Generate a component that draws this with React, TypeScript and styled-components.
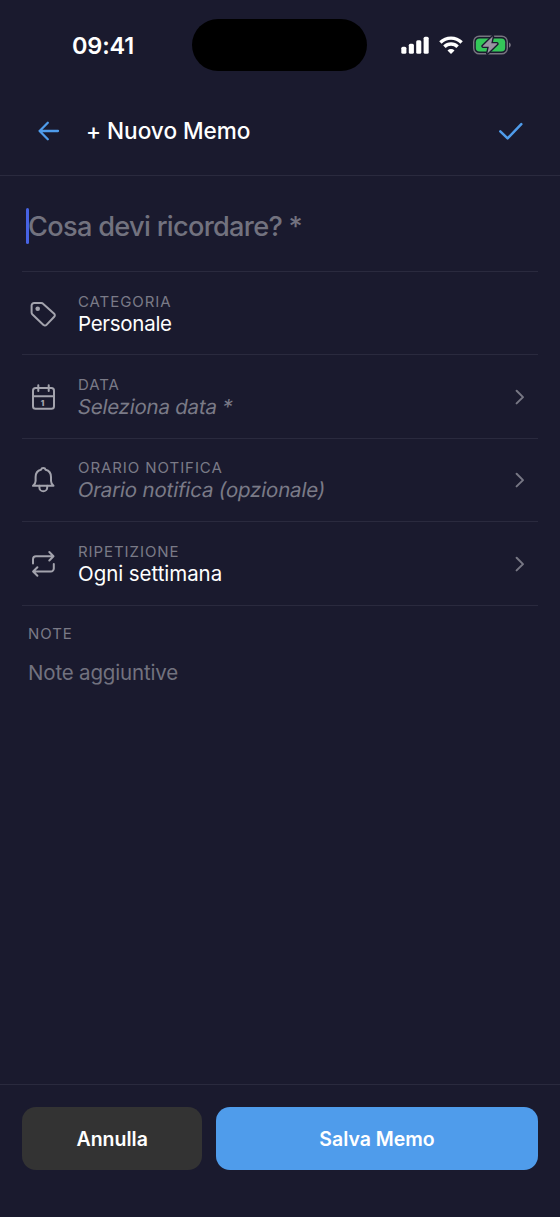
import React from "react";
import styled, { createGlobalStyle } from "styled-components";

const GlobalStyle = createGlobalStyle`
  *, *::before, *::after { box-sizing: border-box; }
  body {
    margin: 0;
    background: #1a1a2e;
    font-family: Inter, "Liberation Sans", sans-serif;
    color: #ffffff;
  }
  svg { display: block; flex: none; }
`;

const line = "#2a2a3e";

const Screen = styled.div`
  display: flex;
  flex-direction: column;
  width: 560px;
  height: 1217px;
  background: #1a1a2e;
  overflow: hidden;
`;

const StatusBar = styled.div`
  display: grid;
  grid-template-columns: 192.4px 175px 1fr;
  align-items: center;
  height: 90px;
  flex: none;
`;

const Time = styled.span`
  padding-left: 72px;
  padding-top: 1px;
  font-size: 23.5px;
  font-weight: 600;
  line-height: 28px;
  letter-spacing: -0.2px;
`;

const Island = styled.div`
  height: 51.5px;
  border-radius: 26px;
  background: #000000;
`;

const StatusIcons = styled.div`
  display: flex;
  align-items: center;
  gap: 10px;
  padding-left: 34px;
`;

const Header = styled.header`
  display: flex;
  align-items: center;
  height: 86px;
  padding: 0 36px 3px;
  border-bottom: 1px solid ${line};
  flex: none;
`;

const IconButton = styled.button`
  display: flex;
  padding: 0;
  border: 0;
  background: none;
  color: #4f9ceb;
`;

const HeaderTitle = styled.h1`
  flex: 1;
  margin: 0 0 0 24px;
  font-size: 22.6px;
  font-weight: 500;
  line-height: 28px;
  letter-spacing: -0.03px;
`;

const Form = styled.main`
  flex: 1;
  padding: 0 22px;
`;

const TitleField = styled.div`
  display: flex;
  align-items: center;
  height: 96px;
  padding: 5px 0 0 4px;
  border-bottom: 1px solid ${line};
`;

const Caret = styled.span`
  width: 3px;
  height: 36px;
  border-radius: 1.5px;
  background: #4763e4;
`;

const TitlePlaceholder = styled.span`
  margin-left: -1px;
  padding-top: 2px;
  font-size: 27.2px;
  font-weight: 500;
  line-height: 34px;
  letter-spacing: -0.7px;
  color: #72727f;
`;

const Row = styled.div`
  display: flex;
  align-items: center;
  height: 83.4px;
  padding: 1px 6px 0;
  border-bottom: 1px solid ${line};
  color: #a3a3ad;
`;

const RowText = styled.div`
  display: flex;
  flex: 1;
  flex-direction: column;
  align-items: flex-start;
  margin-left: 20px;
`;

const Label = styled.span`
  font-size: 15px;
  line-height: 20px;
  letter-spacing: 0.93px;
  color: #7a7a87;
`;

const Value = styled.span<{ $empty?: boolean; $tracking?: number }>`
  font-size: 20.5px;
  line-height: 24px;
  letter-spacing: ${(p) => p.$tracking ?? 0}px;
  color: ${(p) => (p.$empty ? "#7a7a87" : "#ffffff")};
  transform: ${(p) => (p.$empty ? "skewX(-10deg)" : "none")};
  transform-origin: 0 50%;
`;

const Notes = styled.div`
  display: flex;
  flex-direction: column;
  gap: 16px;
  padding: 18.4px 6px;
`;

const NotesPlaceholder = styled.span`
  font-size: 20.5px;
  line-height: 26px;
  letter-spacing: -0.17px;
  color: #72727f;
`;

const Footer = styled.footer`
  display: grid;
  grid-template-columns: 180.4px 1fr;
  gap: 14px;
  height: 133px;
  padding: 22px 22.4px 47px 22px;
  border-top: 1px solid ${line};
  flex: none;
`;

const Button = styled.button<{ $primary?: boolean }>`
  border: 0;
  border-radius: 14px;
  background: ${(p) => (p.$primary ? "#4f9ceb" : "#333333")};
  color: #ffffff;
  font-family: inherit;
  font-size: 19.5px;
  font-weight: 600;
  padding: 0;
`;

const Signal = () => (
  <svg width="28" height="20" viewBox="0 0 28 20" fill="#fff">
    <rect x="0.3" y="11.8" width="5.1" height="7" rx="1.5" />
    <rect x="7.8" y="8.8" width="5.1" height="10" rx="1.5" />
    <rect x="15.2" y="5.2" width="5.1" height="13.6" rx="1.5" />
    <rect x="22.6" y="1.7" width="5.1" height="17.1" rx="1.5" />
  </svg>
);

const Wifi = () => (
  <svg width="24" height="20" viewBox="0 0 24 20" fill="none" stroke="#fff" strokeWidth="3.4">
    <path d="M1.400 7.500a15 15 0 0 1 21.200 0" />
    <path d="M5.400 11.800a9.300 9.300 0 0 1 13.200 0" />
    <path d="M12 19l-3.500-3.600a4.900 4.900 0 0 1 7 0z" fill="#fff" stroke="none" />
  </svg>
);

const Battery = () => (
  <svg width="38" height="20" viewBox="0 0 38 20">
    <rect x="0.7" y="1.2" width="33.6" height="17.6" rx="5.6" fill="none" stroke="#77747f" strokeWidth="1.4" />
    <path d="M36 7.4c2.4.8 2.4 4.4 0 5.200z" fill="#77747f" />
    <rect x="2.8" y="3.4" width="29.4" height="13.2" rx="3.8" fill="#34c759" />
    <path
      d="M19.800 1.300L9.800 10.900a.5.5 0 0 0 .4.8h5.600l-1.400 6.900 9.800-9.500a.5.5 0 0 0-.4-.8h-5.500z"
      fill="#9a94a2"
      stroke="#1a1a2e"
      strokeWidth="2.800"
      strokeLinejoin="round"
      paintOrder="stroke"
    />
  </svg>
);

const BackIcon = () => (
  <svg width="26" height="26" viewBox="0 0 26 26" fill="none" stroke="currentColor" strokeWidth="2.300" strokeLinecap="round" strokeLinejoin="round">
    <path d="M22 13H3.600M11.800 4.800L3.600 13l8.200 8.200" />
  </svg>
);

const CheckIcon = () => (
  <svg width="26" height="26" viewBox="0 0 26 26" fill="none" stroke="currentColor" strokeWidth="2.500" strokeLinecap="round" strokeLinejoin="round">
    <path d="M2.300 13.300l7.300 7.100L23.300 6.200" />
  </svg>
);

const RowIcon = ({ children }: { children: React.ReactNode }) => (
  <svg width="30" height="30" viewBox="0 0 30 30" fill="none" stroke="currentColor" strokeWidth="2" strokeLinecap="round" strokeLinejoin="round">
    {children}
  </svg>
);

const TagIcon = () => (
  <RowIcon>
    <path d="M6.200 4h7a3 3 0 0 1 2.100.9l10.900 9.900a2 2 0 0 1 0 2.900L18.500 25.900a2.100 2.100 0 0 1-3 0L4.500 15.500a3 3 0 0 1-.9-2.100V6.600A2.600 2.600 0 0 1 6.200 4z" />
    <circle cx="9.700" cy="9.800" r="2.300" fill="currentColor" stroke="none" />
  </RowIcon>
);

const CalendarIcon = () => (
  <RowIcon>
    <rect x="5" y="6.100" width="21" height="20.700" rx="2.600" />
    <path d="M5 14.200h21M10.300 3.300v5.600M20.700 3.300v5.600" />
    <text x="12.700" y="23.800" fontFamily="Inter, sans-serif" fontSize="7.800" fontWeight="900" fill="currentColor" stroke="none">1</text>
  </RowIcon>
);

const BellIcon = () => (
  <RowIcon>
    <path d="M5 20.800h20.500c-1.600-1.300-2.500-2.700-2.500-4.700V12c0-4-2.100-6.500-5.400-7.300C17.300 3.600 16.500 3 15.300 3s-2 .6-2.300 1.700C9.700 5.500 7.600 8 7.600 12v4.100c0 2-.9 3.400-2.600 4.700z" />
    <path d="M11.400 20.800v1.600a3.900 3.900 0 0 0 7.800 0v-1.600" />
  </RowIcon>
);

const RepeatIcon = () => (
  <RowIcon>
    <path d="M5 14.600v-4.400a3 3 0 0 1 3-3h17.400M21.300 3l4.200 4.200-4.200 4.300" />
    <path d="M25.800 15v4.500a3 3 0 0 1-3 3H5.200M9.400 18.200l-4.300 4.300 4.300 4.300" />
  </RowIcon>
);

const Chevron = () => (
  <svg width="20" height="20" viewBox="0 0 20 20" fill="none" stroke="#777784" strokeWidth="2" strokeLinecap="round" strokeLinejoin="round">
    <path d="M4.600 3.800l6.400 6.300-6.400 6.300" />
  </svg>
);

type Field = {
  icon: React.ReactNode;
  label: string;
  value: string;
  tracking: number;
  empty?: boolean;
  arrow?: boolean;
};

const fields: Field[] = [
  { icon: <TagIcon />, label: "CATEGORIA", value: "Personale", tracking: -0.28 },
  { icon: <CalendarIcon />, label: "DATA", value: "Seleziona data *", tracking: -0.22, empty: true, arrow: true },
  { icon: <BellIcon />, label: "ORARIO NOTIFICA", value: "Orario notifica (opzionale)", tracking: -0.17, empty: true, arrow: true },
  { icon: <RepeatIcon />, label: "RIPETIZIONE", value: "Ogni settimana", tracking: -0.05, arrow: true },
];

export default function App() {
  return (
    <>
      <GlobalStyle />
      <Screen>
        <StatusBar>
          <Time>09:41</Time>
          <Island />
          <StatusIcons>
            <Signal />
            <Wifi />
            <Battery />
          </StatusIcons>
        </StatusBar>
        <Header>
          <IconButton aria-label="Indietro"><BackIcon /></IconButton>
          <HeaderTitle>+ Nuovo Memo</HeaderTitle>
          <IconButton aria-label="Salva"><CheckIcon /></IconButton>
        </Header>
        <Form>
          <TitleField>
            <Caret />
            <TitlePlaceholder>Cosa devi ricordare? *</TitlePlaceholder>
          </TitleField>
          {fields.map((f) => (
            <Row key={f.label}>
              {f.icon}
              <RowText>
                <Label>{f.label}</Label>
                <Value $empty={f.empty} $tracking={f.tracking}>{f.value}</Value>
              </RowText>
              {f.arrow && <Chevron />}
            </Row>
          ))}
          <Notes>
            <Label>NOTE</Label>
            <NotesPlaceholder>Note aggiuntive</NotesPlaceholder>
          </Notes>
        </Form>
        <Footer>
          <Button>Annulla</Button>
          <Button $primary>Salva Memo</Button>
        </Footer>
      </Screen>
    </>
  );
}
